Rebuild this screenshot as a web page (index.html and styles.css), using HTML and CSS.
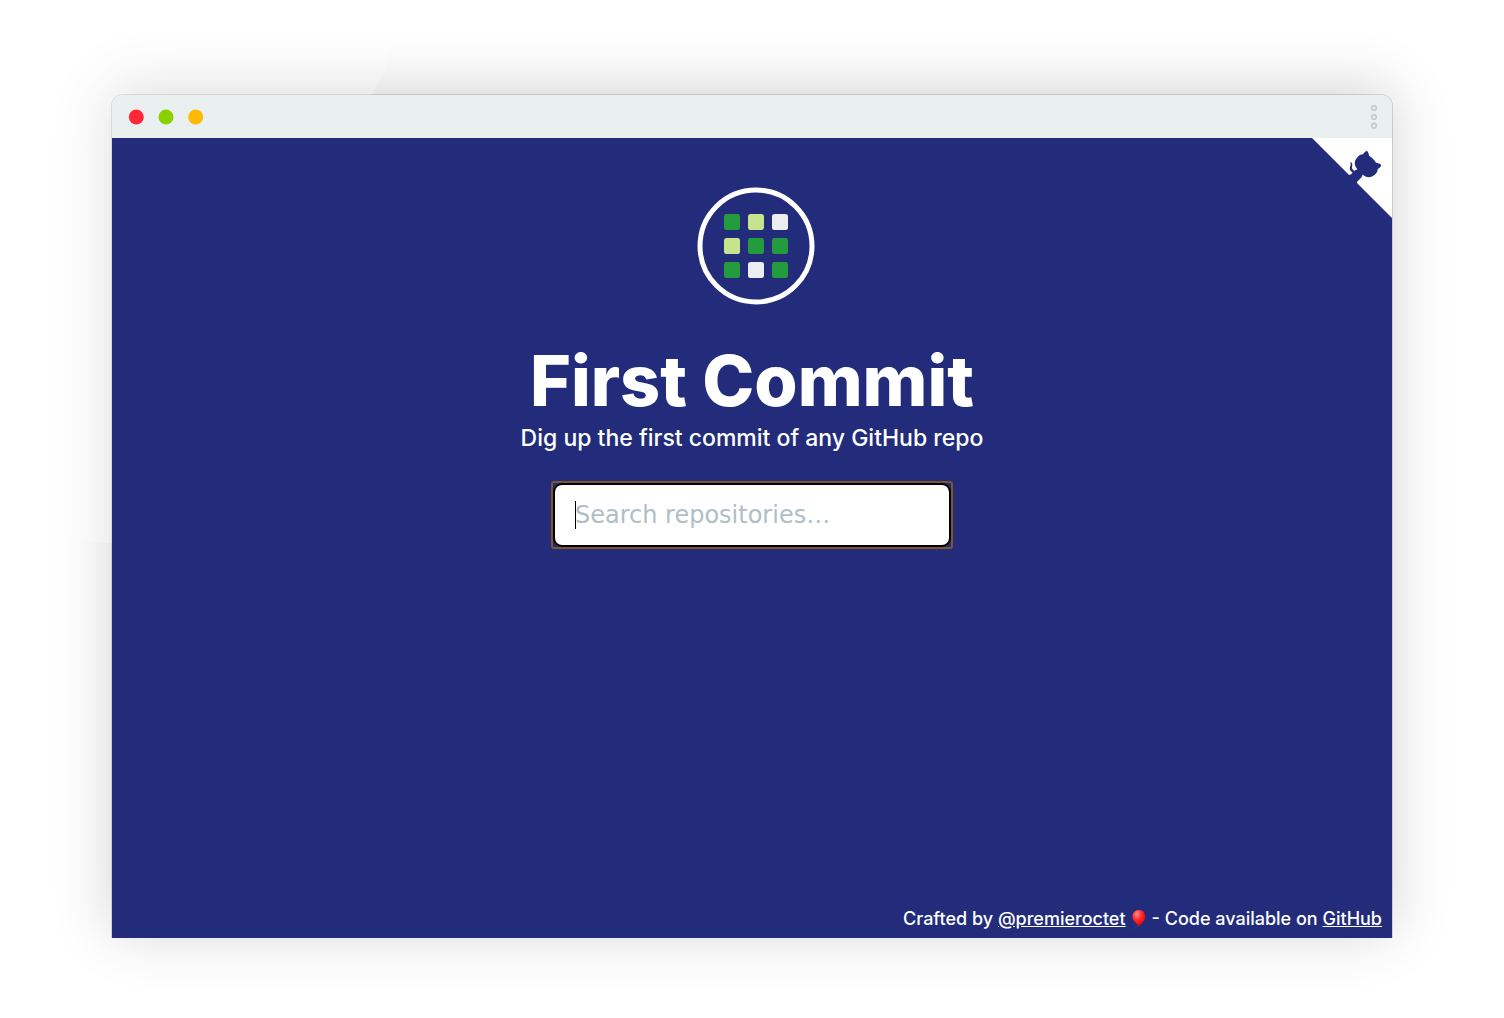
FILE: index.html
```html
<!DOCTYPE html>
<html lang="en">
<head>
<meta charset="utf-8">
<title>First Commit</title>
<link rel="stylesheet" href="styles.css">
</head>
<body>
<div class="window">
  <div class="titlebar">
    <svg class="lights" width="76" height="16" viewBox="0 0 76 16" aria-hidden="true">
      <circle cx="8.3" cy="8" r="7.5" fill="#ff2738"/>
      <circle cx="38" cy="8" r="7.5" fill="#8ad100"/>
      <circle cx="67.7" cy="8" r="7.5" fill="#ffb900"/>
    </svg>
    <svg class="dots" width="8" height="26" viewBox="0 0 8 26" fill="none" stroke="#c3c8cd" stroke-width="1.6" aria-hidden="true">
      <circle cx="4" cy="4" r="2.3"/><circle cx="4" cy="13" r="2.3"/><circle cx="4" cy="21.7" r="2.3"/>
    </svg>
  </div>
  <div class="page">
    <a class="corner" href="#" aria-label="View source on GitHub">
      <svg width="80" height="80" viewBox="0 0 250 250" fill="#222c7b" aria-hidden="true">
        <path fill="#fff" d="M0,0 L115,115 L130,115 L142,142 L250,250 L250,0 Z"/>
        <path d="M128.3,109.0 C113.8,99.7 119.0,89.6 119.0,89.6 C122.0,82.7 120.5,78.6 120.5,78.6 C119.2,72.0 123.4,76.3 123.4,76.3 C127.3,80.9 125.5,87.3 125.5,87.3 C122.9,97.6 130.6,101.9 134.4,103.2"/>
        <path d="M115.0,115.0 C114.9,115.1 118.7,116.5 119.8,115.4 L133.7,101.6 C136.9,99.2 139.9,98.4 142.2,98.6 C133.8,88.0 127.5,74.4 143.8,58.0 C148.5,53.4 154.0,51.2 159.7,51.0 C160.3,49.4 163.2,43.6 171.4,40.1 C171.4,40.1 176.1,42.5 178.8,56.2 C183.1,58.6 187.2,61.8 190.9,65.4 C194.5,69.0 197.7,73.2 200.1,77.6 C213.8,80.2 216.3,84.9 216.3,84.9 C212.7,93.1 206.9,96.0 205.4,96.6 C205.1,102.4 203.0,107.8 198.3,112.5 C181.9,128.9 168.3,122.5 157.7,114.1 C157.9,116.9 156.7,120.9 152.7,124.9 L141.0,136.5 C139.8,137.7 141.6,141.9 141.8,141.8 Z"/>
      </svg>
    </a>
    <main class="hero">
      <svg class="logo" width="128" height="128" viewBox="0 0 128 128" aria-hidden="true">
        <circle cx="68" cy="64" r="56" fill="none" stroke="#fff" stroke-width="5"/>
        <g fill="#249b3c">
          <rect x="36" y="32" width="16" height="16" rx="2.5"/>
          <rect x="60" y="56" width="16" height="16" rx="2.5"/>
          <rect x="84" y="56" width="16" height="16" rx="2.5"/>
          <rect x="36" y="80" width="16" height="16" rx="2.5"/>
          <rect x="84" y="80" width="16" height="16" rx="2.5"/>
        </g>
        <g fill="#c6e48b">
          <rect x="60" y="32" width="16" height="16" rx="2.5"/>
          <rect x="36" y="56" width="16" height="16" rx="2.5"/>
        </g>
        <g fill="#ebedf0">
          <rect x="84" y="32" width="16" height="16" rx="2.5"/>
          <rect x="60" y="80" width="16" height="16" rx="2.5"/>
        </g>
      </svg>
      <h1 class="title">First Commit</h1>
      <p class="tagline">Dig up the first commit of any GitHub repo</p>
      <div class="search">
        <input class="search-input" type="text" placeholder="Search repositories…" aria-label="Search repositories">
      </div>
    </main>
    <footer class="footer">
      <span>Crafted by <a href="#">@premieroctet</a></span>
      <svg class="balloon" width="16" height="20" viewBox="0 0 16 20" aria-hidden="true">
        <defs><radialGradient id="shine" cx=".35" cy=".25" r=".75"><stop offset="0" stop-color="#ff8a80"/><stop offset=".5" stop-color="#ff2a2a"/><stop offset="1" stop-color="#e8000c"/></radialGradient></defs>
        <path d="M8 16.500Q6 17 2 19.500" fill="none" stroke="#3a4272" stroke-width="1"/>
        <path d="M8 1C11.800 1 14.300 3.800 14.300 7.500C14.300 11 11.800 14 8.800 16L9.300 17H6.800L7.300 16C4.300 14 1.500 11 1.500 7.500C1.500 3.800 4.200 1 8 1Z" fill="url(#shine)"/>
      </svg>
      <span>- Code available on <a href="#">GitHub</a></span>
    </footer>
  </div>
</div>
</body>
</html>
```
FILE: styles.css
```css
* { box-sizing: border-box; }

body {
  margin: 0;
  min-height: 100vh;
  padding: 94px 111px 80px;
  display: flex;
  background: #fff;
  color: #fff;
  font-family: Inter, "Open Sans", sans-serif;
}

.window {
  position: relative;
  isolation: isolate;
  flex: 1;
  display: flex;
  flex-direction: column;
  border: 1px solid #dcdddd;
  border-bottom: 0;
  border-radius: 12px 12px 0 0;
}

.window::before {
  content: "";
  position: absolute;
  inset: 0;
  z-index: -2;
  border-radius: 12px;
  box-shadow: 0 -6px 60px rgba(0, 0, 0, 0.18);
}

/* pale blob that softens the shadow at the top left */
.window::after {
  content: "";
  position: absolute;
  top: -95px;
  left: -112px;
  z-index: -1;
  width: 400px;
  height: 543px;
  clip-path: path("M0 0H384Q402 60 368 98L300 300V543H105Q80 543 60 528L0 500Z");
  background: rgba(255, 255, 255, 0.25);
}

.titlebar {
  display: flex;
  align-items: center;
  justify-content: space-between;
  height: 43px;
  padding: 0 14px 0 16px;
  border-radius: 11px 11px 0 0;
  background: #eaf0f0;
}

.page {
  position: relative;
  flex: 1;
  display: flex;
  flex-direction: column;
  background: #222c7b;
}

.corner {
  position: absolute;
  top: 0;
  right: 0;
}

.corner svg { display: block; }

.hero {
  flex: 1;
  display: flex;
  flex-direction: column;
  align-items: center;
  padding: 44px 20px 0;
  text-align: center;
}

.title {
  margin: 27px 0 0;
  font-size: 70px;
  font-weight: 800;
  line-height: 88px;
}

.tagline {
  margin: 0;
  font-size: 23px;
  font-weight: 500;
  line-height: 26px;
}

.search {
  width: 402px;
  max-width: 100%;
  margin-top: 30px;
  border: 2px solid #815627;
  border-radius: 3px;
}

.search-input {
  display: block;
  width: 100%;
  height: 64px;
  padding: 0 20px;
  border: 2px solid #000;
  border-radius: 9px;
  outline: 0;
  background: linear-gradient(#000, #000) 20px 50% / 1px 28px no-repeat #fff;
  color: #222;
  font-family: "DejaVu Sans", sans-serif;
  font-size: 24px;
}

.search-input::placeholder {
  color: #b0bec5;
  opacity: 1;
}

.footer {
  display: flex;
  align-items: center;
  justify-content: flex-end;
  gap: 5px;
  padding: 8px 10px 7px;
  font-size: 18px;
  font-weight: 500;
  line-height: 24px;
}

.footer a { color: inherit; }
```
